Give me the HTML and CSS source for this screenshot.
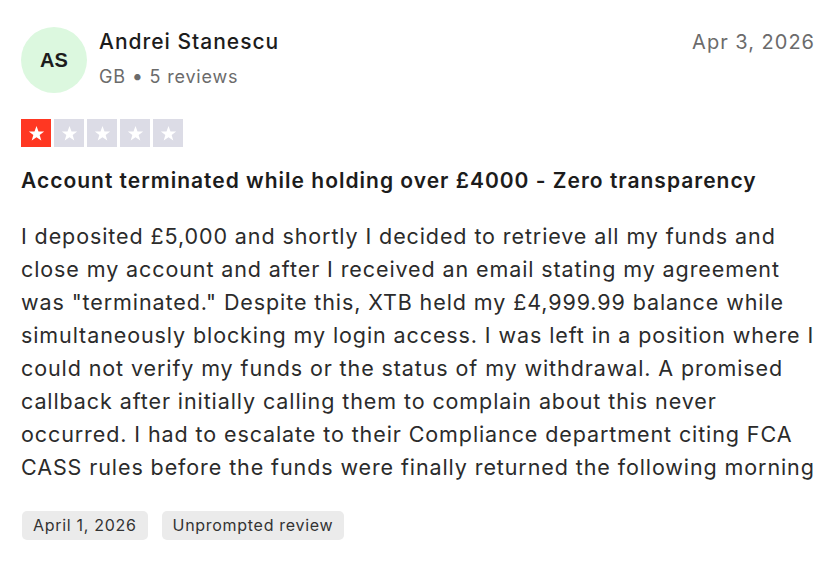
FILE: index.html
```html
<!DOCTYPE html>
<html lang="en">
<head>
<meta charset="utf-8">
<link rel="stylesheet" href="styles.css">
</head>
<body>
<article class="review">
  <header class="head">
    <div class="avatar">AS</div>
    <div class="who">
      <div class="name">Andrei Stanescu</div>
      <div class="meta">GB <span class="dot">•</span> 5 reviews</div>
    </div>
    <time class="date">Apr 3, 2026</time>
  </header>
  <div class="stars">
    <span class="star on"><svg viewBox="0 0 24 24"><path d="M12 4.2l2.1 5.6 5.9.2-4.7 3.6 1.7 5.7L12 16l-5 3.3 1.7-5.7L4 10l5.9-.2z" fill="#fff"/></svg></span>
    <span class="star"><svg viewBox="0 0 24 24"><path d="M12 4.2l2.1 5.6 5.9.2-4.7 3.6 1.7 5.7L12 16l-5 3.3 1.7-5.7L4 10l5.9-.2z" fill="#fff"/></svg></span>
    <span class="star"><svg viewBox="0 0 24 24"><path d="M12 4.2l2.1 5.6 5.9.2-4.7 3.6 1.7 5.7L12 16l-5 3.3 1.7-5.7L4 10l5.9-.2z" fill="#fff"/></svg></span>
    <span class="star"><svg viewBox="0 0 24 24"><path d="M12 4.2l2.1 5.6 5.9.2-4.7 3.6 1.7 5.7L12 16l-5 3.3 1.7-5.7L4 10l5.9-.2z" fill="#fff"/></svg></span>
    <span class="star"><svg viewBox="0 0 24 24"><path d="M12 4.2l2.1 5.6 5.9.2-4.7 3.6 1.7 5.7L12 16l-5 3.3 1.7-5.7L4 10l5.9-.2z" fill="#fff"/></svg></span>
  </div>
  <h2 class="title">Account terminated while holding over £4000 - Zero transparency</h2>
  <p class="body">I deposited £5,000 and shortly I decided to retrieve all my funds and<br>close my account and after I received an email stating my agreement<br>was "terminated." Despite this, XTB held my £4,999.99 balance while<br>simultaneously blocking my login access. I was left in a position where I<br>could not verify my funds or the status of my withdrawal. A promised<br>callback after initially calling them to complain about this never<br>occurred. I had to escalate to their Compliance department citing FCA<br>CASS rules before the funds were finally returned the following morning</p>
  <div class="tags">
    <span class="tag">April 1, 2026</span>
    <span class="tag">Unprompted review</span>
  </div>
</article>
</body>
</html>
```
FILE: styles.css
```css
html, body {
  margin: 0;
  padding: 0;
  background: #ffffff;
}
body {
  font-family: Inter, "Open Sans", sans-serif;
  color: #1c1c1c;
}
.review {
  padding: 27px 22px 0 21px;
}
.head {
  display: flex;
  align-items: flex-start;
}
.avatar {
  width: 66px;
  height: 66px;
  border-radius: 50%;
  background: #dcf8df;
  display: flex;
  align-items: center;
  justify-content: center;
  font-family: "Liberation Sans", Arial, sans-serif;
  font-weight: 700;
  font-size: 20px;
  color: #1c1c1c;
  flex: none;
}
.who {
  margin-left: 12px;
  flex: 1;
  padding-top: 2px;
}
.name {
  font-size: 21px;
  font-weight: 500;
  line-height: 26px;
  letter-spacing: 1px;
  color: #1c1c1c;
}
.meta {
  margin-top: 9px;
  font-size: 18px;
  line-height: 24px;
  letter-spacing: 0.8px;
  color: #6b6b6b;
}
.dot {
  font-size: 20px;
}
.date {
  font-size: 20px;
  line-height: 26px;
  letter-spacing: 1px;
  color: #6b6b6b;
  padding-top: 2px;
}
.stars {
  display: flex;
  gap: 3px;
  margin-top: 26px;
}
.star {
  width: 30px;
  height: 28px;
  background: #dcdce6;
  display: flex;
  align-items: center;
  justify-content: center;
}
.star.on {
  background: #ff3722;
}
.star svg {
  width: 23px;
  height: 23px;
}
.title {
  margin: 20px 0 0;
  font-size: 21px;
  font-weight: 600;
  line-height: 28px;
  letter-spacing: 1px;
  color: #1c1c1c;
}
.body {
  margin: 25px 0 0;
  font-size: 21.5px;
  line-height: 33px;
  letter-spacing: 0.9px;
  color: #2b2b2b;
  white-space: nowrap;
}
.tags {
  display: flex;
  gap: 14px;
  margin-top: 27px;
  padding-left: 1px;
}
.tag {
  background: #ebebeb;
  border-radius: 5px;
  font-size: 16px;
  line-height: 29px;
  letter-spacing: 0.7px;
  padding: 0 11px;
  color: #333333;
}
```
